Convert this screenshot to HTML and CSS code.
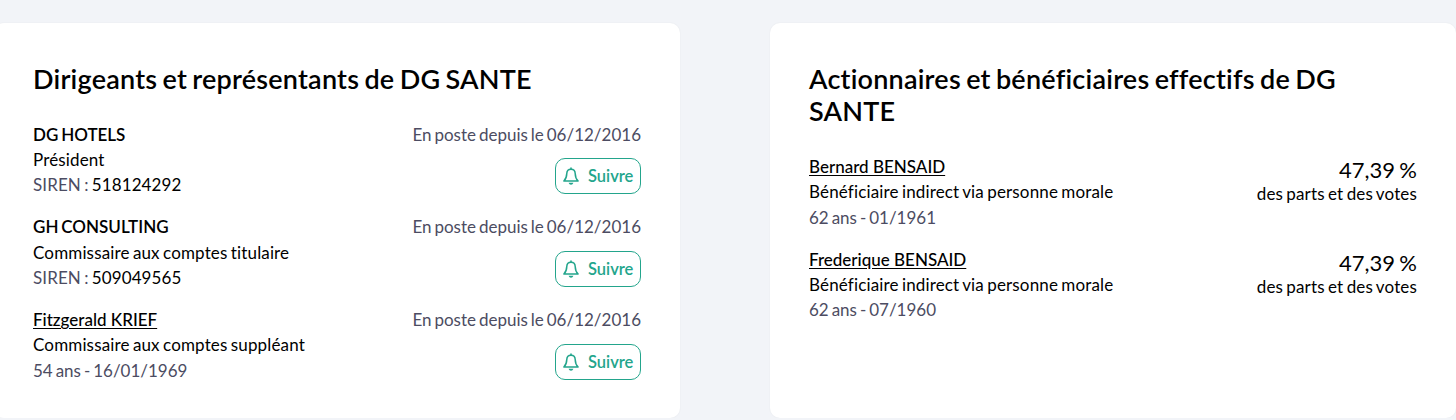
FILE: index.html
```html
<!DOCTYPE html>
<html lang="fr">
<head>
    <meta charset="UTF-8">
    <meta name="viewport" content="width=device-width, initial-scale=1.0">
    <title>DG SANTE - Dirigeants et actionnaires</title>
    <link rel="stylesheet" href="styles.css">
</head>
<body>
    <svg width="0" height="0" class="sprite">
        <symbol id="bell" viewBox="0 0 16 18">
            <path d="M8 2.2C5.4 2.2 3.9 4 3.8 6.4C3.7 10.2 3 11.9 0.9 14H15.1C13 11.9 12.3 10.2 12.2 6.4C12.1 4 10.6 2.2 8 2.2Z" fill="none" stroke="currentColor" stroke-width="1.5" stroke-linejoin="round"/>
            <path d="M8 0.4V2.2" stroke="currentColor" stroke-width="1.6"/>
            <path d="M5.6 15.8H10.4C10 17 9.1 17.7 8 17.7S6 17 5.6 15.8Z" fill="currentColor"/>
        </symbol>
    </svg>

    <div class="container">
        <section class="card">
            <h2>Dirigeants et représentants de DG SANTE</h2>
            <ul class="person-list">
                <li class="person">
                    <div>
                        <div class="name">DG HOTELS</div>
                        <div class="role">Président</div>
                        <div class="siren"><span class="muted">SIREN :</span> 518124292</div>
                    </div>
                    <div class="side">
                        <div class="muted since">En poste depuis le 06/12/2016</div>
                        <button class="btn-follow"><svg class="icon"><use href="#bell"/></svg>Suivre</button>
                    </div>
                </li>
                <li class="person">
                    <div>
                        <div class="name">GH CONSULTING</div>
                        <div class="role">Commissaire aux comptes titulaire</div>
                        <div class="siren"><span class="muted">SIREN :</span> 509049565</div>
                    </div>
                    <div class="side">
                        <div class="muted since">En poste depuis le 06/12/2016</div>
                        <button class="btn-follow"><svg class="icon"><use href="#bell"/></svg>Suivre</button>
                    </div>
                </li>
                <li class="person">
                    <div>
                        <a class="name" href="#">Fitzgerald KRIEF</a>
                        <div class="role">Commissaire aux comptes suppléant</div>
                        <div class="muted">54 ans - 16/01/1969</div>
                    </div>
                    <div class="side">
                        <div class="muted since">En poste depuis le 06/12/2016</div>
                        <button class="btn-follow"><svg class="icon"><use href="#bell"/></svg>Suivre</button>
                    </div>
                </li>
            </ul>
        </section>

        <section class="card">
            <h2>Actionnaires et bénéficiaires effectifs de DG SANTE</h2>
            <ul class="person-list">
                <li class="person">
                    <div>
                        <a class="name" href="#">Bernard BENSAID</a>
                        <div class="role">Bénéficiaire indirect via personne morale</div>
                        <div class="muted">62 ans - 01/1961</div>
                    </div>
                    <div class="shares">
                        <div class="percent">47,39 %</div>
                        <div class="role">des parts et des votes</div>
                    </div>
                </li>
                <li class="person">
                    <div>
                        <a class="name" href="#">Frederique BENSAID</a>
                        <div class="role">Bénéficiaire indirect via personne morale</div>
                        <div class="muted">62 ans - 07/1960</div>
                    </div>
                    <div class="shares">
                        <div class="percent">47,39 %</div>
                        <div class="role">des parts et des votes</div>
                    </div>
                </li>
            </ul>
        </section>
    </div>
</body>
</html>
```
FILE: styles.css
```css
* {
    box-sizing: border-box;
}
body {
    margin: 0;
    background: #f2f4f8;
    color: #000;
    font-family: Lato, sans-serif;
    font-size: 17px;
    line-height: 25.2px;
    word-spacing: -1.4px;
    overflow: hidden;
}
.sprite {
    display: block;
}
.container {
    display: grid;
    grid-template-columns: 1fr 1fr;
    gap: 90px;
    height: 418px;
    padding-top: 23px;
    margin-left: -6px;
}
.card {
    padding: 39.5px 39px 0;
    background: #fff;
    border-radius: 10px;
    box-shadow: 0 0 2px rgba(0, 0, 0, 0.06);
}
h2 {
    margin: 0 0 26.8px;
    font-size: 27px;
    font-weight: 600;
    line-height: 32.4px;
    letter-spacing: 0.22px;
    word-spacing: -1.7px;
}
.person-list {
    display: flex;
    flex-direction: column;
    gap: 17.2px;
    margin: 0;
    padding: 0;
    list-style: none;
}
.person {
    display: flex;
    justify-content: space-between;
    height: 75.6px;
    white-space: nowrap;
}
.name {
    display: block;
    font-weight: 600;
}
a.name {
    width: fit-content;
    color: #000;
    font-weight: 500;
    text-underline-offset: 2px;
    word-spacing: 0;
}
.role {
    letter-spacing: 0.15px;
    word-spacing: -1.2px;
}
.siren {
    letter-spacing: 0.1px;
    word-spacing: -1.2px;
}
.muted {
    color: #4c4c62;
}
.since {
    word-spacing: -1.4px;
}
.side {
    display: flex;
    flex-direction: column;
    align-items: flex-end;
    gap: 11.2px;
}
.btn-follow {
    display: flex;
    align-items: center;
    flex-shrink: 0;
    gap: 9px;
    width: 86px;
    height: 36px;
    padding: 0 7px;
    background: #fff;
    border: 1px solid #23a58c;
    border-radius: 10px;
    color: #23a58c;
    font: 600 16.5px Lato, sans-serif;
}
.icon {
    flex-shrink: 0;
    width: 16px;
    height: 18px;
}
.shares {
    padding-top: 4px;
    text-align: right;
}
.percent {
    font-size: 22px;
    line-height: 23px;
}
```
